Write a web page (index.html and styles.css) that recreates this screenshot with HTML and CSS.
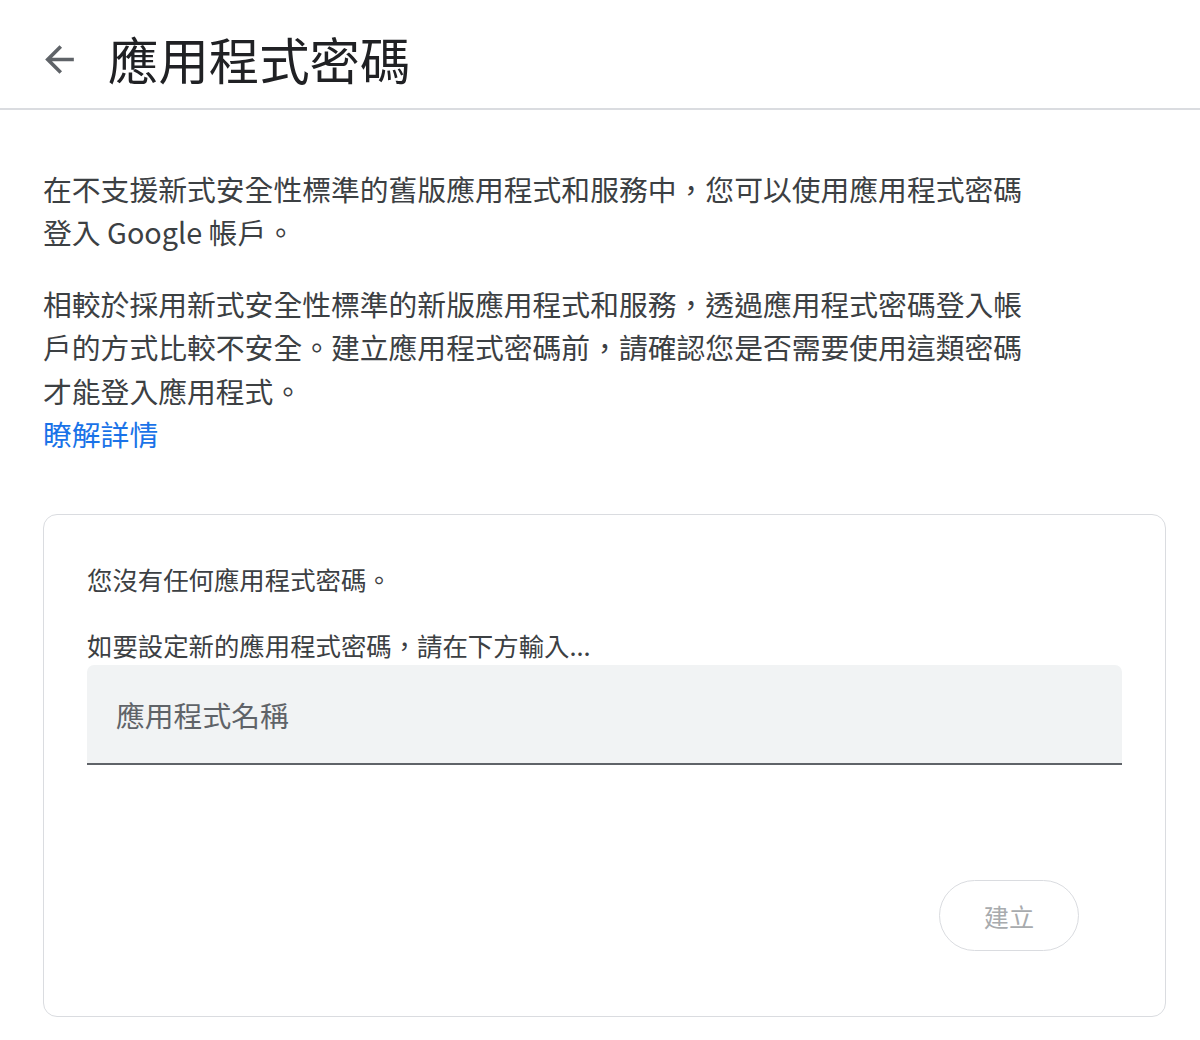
FILE: index.html
```html
<!DOCTYPE html>
<html lang="zh-Hant">
<head>
<meta charset="utf-8">
<title>應用程式密碼</title>
<link rel="stylesheet" href="styles.css">
</head>
<body>
<header class="topbar">
  <button class="back" aria-label="返回">
    <svg viewBox="0 0 24 24" width="43" height="43"><path fill="#5f6368" d="M20 11H7.83l5.59-5.59L12 4l-8 8 8 8 1.41-1.41L7.83 13H20v-2z"/></svg>
  </button>
  <h1 class="title">應用程式密碼</h1>
</header>
<main class="content">
  <p class="para">在不支援新式安全性標準的舊版應用程式和服務中，您可以使用應用程式密碼登入 Google 帳戶。</p>
  <p class="para para-last">相較於採用新式安全性標準的新版應用程式和服務，透過應用程式密碼登入帳戶的方式比較不安全。建立應用程式密碼前，請確認您是否需要使用這類密碼才能登入應用程式。</p>
  <a class="link" href="#">瞭解詳情</a>
  <section class="card">
    <p class="card-text">您沒有任何應用程式密碼。</p>
    <p class="card-text card-text-2">如要設定新的應用程式密碼，請在下方輸入...</p>
    <div class="field"><span class="placeholder">應用程式名稱</span></div>
    <div class="actions"><button class="create" disabled>建立</button></div>
  </section>
</main>
</body>
</html>
```

FILE: styles.css
```css
* { box-sizing: border-box; }
body {
  margin: 0;
  background: #fff;
  font-family: "Noto Sans CJK TC", "Noto Sans", sans-serif;
  color: #3c4043;
}
.topbar {
  height: 110px;
  padding: 10px 0 0 38px;
  display: flex;
  align-items: center;
  border-bottom: 2px solid #dadce0;
}
.back {
  width: 43px;
  height: 43px;
  padding: 0;
  border: 0;
  background: none;
  display: flex;
}
.title {
  margin: 0 0 0 27px;
  font-size: 50.4px;
  font-weight: 400;
  color: #202124;
  line-height: 1;
}
.content {
  padding: 57px 0 40px 43px;
}
.para {
  margin: 0;
  max-width: 992px;
  font-size: 28.8px;
  line-height: 43.2px;
  color: #3c4043;
}
.para-last { margin-top: 28.8px; }
.link {
  display: block;
  font-size: 28.8px;
  line-height: 43.2px;
  color: #1a73e8;
  text-decoration: none;
  width: max-content;
}
.card {
  margin-top: 59px;
  width: 1123px;
  border: 1.8px solid #dadce0;
  border-radius: 14px;
  padding: 46px 43px 65px 43px;
}
.card-text {
  margin: 0;
  font-size: 25.4px;
  line-height: 36px;
  color: #3c4043;
}
.card-text-2 { margin-top: 30px; }
.field {
  margin-top: 2px;
  height: 100px;
  background: #f1f3f4;
  border-radius: 7px 7px 0 0;
  border-bottom: 2px solid #5f6368;
  display: flex;
  align-items: center;
  padding-left: 29px;
}
.placeholder {
  font-size: 28.8px;
  color: #5f6368;
}
.actions {
  margin-top: 115px;
  display: flex;
  justify-content: flex-end;
  padding-right: 43px;
}
.create {
  width: 140px;
  height: 71px;
  border: 1.8px solid #dadce0;
  border-radius: 36px;
  background: #fff;
  font-family: "Noto Sans CJK TC", "Noto Sans", sans-serif;
  font-size: 25.2px;
  color: #a8abae;
}
```
